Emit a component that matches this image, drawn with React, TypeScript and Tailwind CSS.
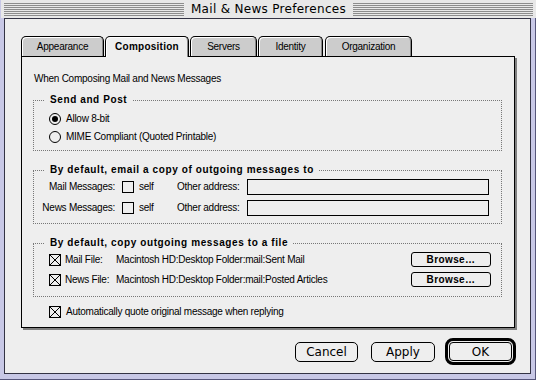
import React from "react";

function CheckBox({ checked = false }: { checked?: boolean }) {
  return (
    <div className="w-[12px] h-[12px] border border-black bg-[#eeeeee] shrink-0 flex">
      {checked && (
        <svg width="10" height="10" viewBox="0 0 10 10" shapeRendering="crispEdges">
          <line x1="0" y1="0" x2="10" y2="10" stroke="black" strokeWidth="1" />
          <line x1="10" y1="0" x2="0" y2="10" stroke="black" strokeWidth="1" />
        </svg>
      )}
    </div>
  );
}

function Radio({ checked = false }: { checked?: boolean }) {
  return (
    <div className="w-[12px] h-[12px] rounded-full border border-black bg-[#eeeeee] shrink-0 flex items-center justify-center">
      {checked && <div className="w-[6px] h-[6px] rounded-full bg-black" />}
    </div>
  );
}

const tabBase =
  "border border-b-0 border-black rounded-t-[5px] flex items-center justify-center text-[10px] shadow-[inset_1px_1px_0_#ffffff,inset_-1px_0_0_#888888]";

function Tab({ label, w, ml, selected }: { label: string; w: string; ml: string; selected?: boolean }) {
  if (selected) {
    return (
      <div className={`${tabBase} ${w} ${ml} h-[21px] -mb-px relative z-10 bg-[#eeeeee] pb-[1px] font-bold tracking-[0.25px]`}>
        {label}
      </div>
    );
  }
  return <div className={`${tabBase} ${w} ${ml} h-[20px] bg-[#cccccc] tracking-[-0.25px]`}>{label}</div>;
}

function Legend({ children }: { children: React.ReactNode }) {
  return (
    <legend className="ml-[11px] px-[5px] text-[10px] leading-[12px] font-bold tracking-[0.6px]">{children}</legend>
  );
}

const stripes =
  "flex-1 h-[13px] bg-[repeating-linear-gradient(to_bottom,#8c8c8c_0px,#8c8c8c_1px,#e8e8e8_1px,#e8e8e8_2px)]";

export default function App() {
  return (
    <div className="w-[536px] h-[380px] flex flex-col bg-[#c8c8e6] font-['Liberation_Sans',Arial,sans-serif] text-black overflow-hidden">
      {/* Title bar */}
      <div className="h-[18px] shrink-0 flex items-center px-[3px] bg-[#e8e8e8] border-l border-[#c8c8e6]">
        <div className={stripes} />
        <div className="px-[7px] font-['DejaVu_Sans',sans-serif] text-[12px] leading-[14px] tracking-[0.3px]">
          Mail &amp; News Preferences
        </div>
        <div className={stripes} />
      </div>

      {/* Frame */}
      <div className="flex-1 flex flex-col pl-[4px] pr-[4px] pb-[5px] border-r border-b border-[#55557a]">
        <div className="flex-1 bg-[#eeeeee] border border-[#333344] flex flex-col pl-[16px] pr-[15px] pt-[17px] text-[10px] tracking-[-0.25px]">
          {/* Tabs */}
          <div className="h-[20px] flex items-end">
            <Tab label="Appearance" w="w-[83px]" ml="ml-0" />
            <Tab label="Composition" w="w-[84px]" ml="ml-[1px]" selected />
            <Tab label="Servers" w="w-[67px]" ml="ml-[1px]" />
            <Tab label="Identity" w="w-[65px]" ml="ml-[1px]" />
            <Tab label="Organization" w="w-[87px]" ml="ml-[2px]" />
          </div>

          {/* Panel */}
          <div className="h-[272px] border border-black bg-[#eeeeee] shadow-[2px_2px_0_#808080] px-[11px] flex flex-col">
            <div className="mt-[16px] ml-[1px] leading-[12px]">When Composing Mail and News Messages</div>

            <fieldset className="mt-[9px] w-[469px] border border-dotted border-[#777777]">
              <Legend>Send and Post</Legend>
              <div className="pl-[15px] pt-[6px] pb-[6px] flex flex-col gap-[4px]">
                <div className="h-[14px] flex items-center gap-[5px]">
                  <Radio checked />
                  <span className="leading-[12px]">Allow 8-bit</span>
                </div>
                <div className="h-[14px] flex items-center gap-[5px]">
                  <Radio />
                  <span className="leading-[12px]">MIME Compliant (Quoted Printable)</span>
                </div>
              </div>
            </fieldset>

            <fieldset className="mt-[13px] w-[469px] border border-dotted border-[#777777]">
              <Legend>By default, email a copy of outgoing messages to</Legend>
              <div className="pt-[3px] pb-[7px] flex flex-col gap-[5px]">
                {["Mail Messages:", "News Messages:"].map((l) => (
                  <div key={l} className="h-[16px] flex items-center">
                    <span className="w-[81px] text-right leading-[12px]">{l}</span>
                    <div className="ml-[7px]">
                      <CheckBox />
                    </div>
                    <span className="ml-[5px] w-[38px] leading-[12px]">self</span>
                    <span className="w-[70px] leading-[12px]">Other address:</span>
                    <div className="w-[242px] h-[16px] border border-black bg-[#eeeeee]" />
                  </div>
                ))}
              </div>
            </fieldset>

            <fieldset className="mt-[13px] w-[469px] border border-dotted border-[#777777]">
              <Legend>By default, copy outgoing messages to a file</Legend>
              <div className="pl-[15px] pr-[10px] pt-[3px] pb-[9px] flex flex-col gap-[5px]">
                {[
                  ["Mail File:", "Macintosh HD:Desktop Folder:mail:Sent Mail"],
                  ["News File:", "Macintosh HD:Desktop Folder:mail:Posted Articles"],
                ].map(([l, p]) => (
                  <div key={l} className="h-[15px] flex items-center">
                    <CheckBox checked />
                    <span className="ml-[4px] w-[51px] leading-[12px]">{l}</span>
                    <span className="leading-[12px]">{p}</span>
                    <div className="ml-auto w-[80px] h-[15px] rounded-[3px] border border-black bg-[#eeeeee] flex items-center justify-center font-bold tracking-[0.4px] leading-[12px]">
                      Browse…
                    </div>
                  </div>
                ))}
              </div>
            </fieldset>

            <div className="mt-[9px] ml-[16px] h-[12px] flex items-center gap-[5px]">
              <CheckBox checked />
              <span className="leading-[12px]">Automatically quote original message when replying</span>
            </div>
          </div>

          {/* Buttons */}
          <div className="mt-[10px] -mr-px h-[27px] flex items-center justify-end font-['DejaVu_Sans',sans-serif] text-[12px] tracking-normal">
            <div className="w-[63px] h-[20px] rounded-[5px] border border-black bg-[#eeeeee] flex items-center justify-center leading-[14px]">
              Cancel
            </div>
            <div className="ml-[13px] w-[64px] h-[20px] rounded-[5px] border border-black bg-[#eeeeee] flex items-center justify-center leading-[14px]">
              Apply
            </div>
            <div className="ml-[10px] w-[71px] h-[27px] rounded-[8px] border-[3px] border-black p-[1px] flex">
              <div className="flex-1 rounded-[4px] border border-black bg-[#eeeeee] flex items-center justify-center leading-[14px]">
                OK
              </div>
            </div>
          </div>
        </div>
      </div>
    </div>
  );
}
